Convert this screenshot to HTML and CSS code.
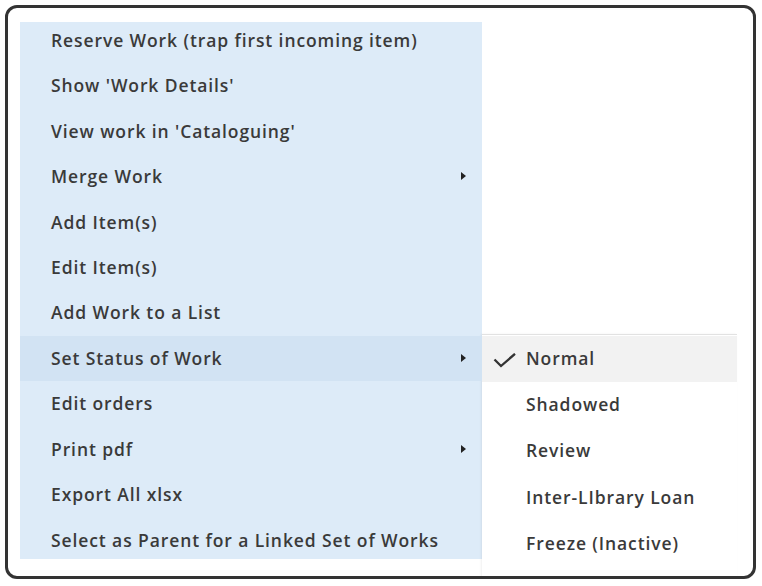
FILE: index.html
```html
<!DOCTYPE html>
<html>
<head>
<meta charset="utf-8">
<link rel="stylesheet" href="styles.css">
</head>
<body>
<div class="frame">
  <div class="menu">
    <ul class="menu-list">
      <li class="item">Reserve Work (trap first incoming item)</li>
      <li class="item">Show 'Work Details'</li>
      <li class="item">View work in 'Cataloguing'</li>
      <li class="item has-sub">Merge Work</li>
      <li class="item">Add Item(s)</li>
      <li class="item">Edit Item(s)</li>
      <li class="item">Add Work to a List</li>
      <li class="item has-sub active">Set Status of Work</li>
      <li class="item">Edit orders</li>
      <li class="item has-sub">Print pdf</li>
      <li class="item">Export All xlsx</li>
      <li class="item">Select as Parent for a Linked Set of Works</li>
    </ul>
  </div>
  <ul class="submenu">
    <li class="sub-item checked"><svg class="check" width="24" height="16" viewBox="0 0 24 16"><path d="M1.5 6.5 L8 13 L22 0.8" fill="none" stroke="#333" stroke-width="2.3"/></svg>Normal</li>
    <li class="sub-item">Shadowed</li>
    <li class="sub-item">Review</li>
    <li class="sub-item">Inter-LIbrary Loan</li>
    <li class="sub-item">Freeze (Inactive)</li>
  </ul>
</div>
</body>
</html>
```
FILE: styles.css
```css
html, body {
  margin: 0;
  padding: 0;
  background: #fff;
}
.frame {
  box-sizing: border-box;
  margin: 5px;
  width: 751px;
  height: 574px;
  border: 3px solid #333;
  border-radius: 12px;
  overflow: hidden;
  display: flex;
  align-items: flex-start;
  padding: 14px 0 0 12px;
  font-family: "Open Sans", sans-serif;
  font-weight: 600;
  font-size: 17.5px;
  letter-spacing: 0.9px;
  color: #3a3a3a;
}
.menu-list, .submenu {
  list-style: none;
  margin: 0;
  padding: 0;
}
.menu {
  width: 462px;
  height: 537px;
  overflow: hidden;
  background: #ddebf8;
  flex: none;
}
.menu-list {
  margin-top: -4.2px;
}
.item {
  position: relative;
  height: 45.45px;
  line-height: 44px;
  padding-left: 31px;
  white-space: nowrap;
}
.item.active {
  background: #d2e3f3;
}
.has-sub::after {
  content: "";
  position: absolute;
  left: 441px;
  top: 18px;
  border-left: 5px solid #222;
  border-top: 4px solid transparent;
  border-bottom: 4px solid transparent;
}
.submenu {
  margin-top: 312px;
  width: 255px;
  height: 300px;
  flex: none;
  background: #fff;
  border-top: 1px solid #e2e2e2;
  padding-top: 1px;
  box-shadow: -1px 0 2px rgba(0,0,0,0.06);
}
.sub-item {
  height: 46.2px;
  line-height: 45px;
  padding-left: 44px;
  position: relative;
  white-space: nowrap;
}
.sub-item.checked {
  background: #f2f2f2;
}
.check {
  position: absolute;
  left: 11px;
  top: 17px;
}
```
